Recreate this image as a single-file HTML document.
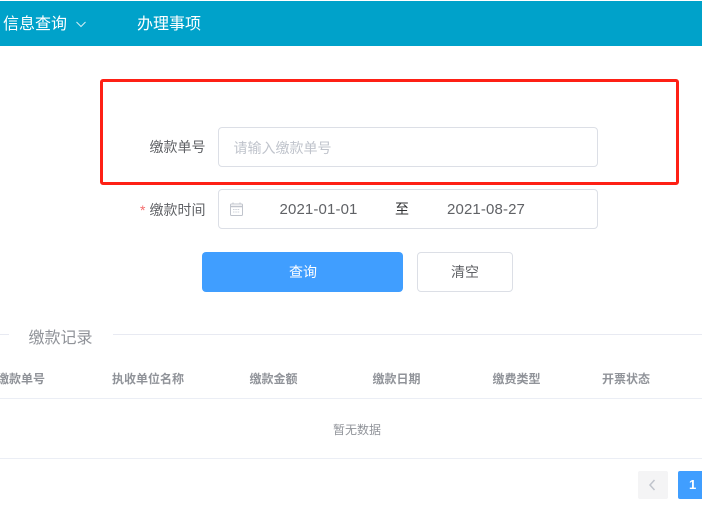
<!DOCTYPE html>
<html><head><meta charset="utf-8">
<style>
html,body{margin:0;padding:0;background:#fff}
body{width:702px;height:508px;position:relative;overflow:hidden;font-family:"Liberation Sans","Noto Sans CJK SC",sans-serif;}
.a{position:absolute;white-space:nowrap}
.th{top:371px;font-size:12px;line-height:16px;font-weight:700;color:#909399}
.lab{font-size:14px;line-height:20px;color:#606266}
</style></head><body>
<div class="a" style="left:0;top:1px;width:702px;height:45px;background:#00a2ca"></div>
<div class="a" style="left:3px;top:14px;font-size:16px;line-height:22px;color:#fff">信息查询</div>
<svg class="a" style="left:75px;top:20px" width="12" height="10" viewBox="0 0 12 10"><path d="M1.5 2L6 6.5L10.5 2" fill="none" stroke="#d5eef5" stroke-width="1"/></svg>
<div class="a" style="left:137px;top:14px;font-size:16px;line-height:22px;color:#fff">办理事项</div>

<div class="a" style="left:100px;top:79px;width:579px;height:106px;box-sizing:border-box;border:3px solid #fe2015;border-radius:3px"></div>

<div class="a lab" style="left:149.5px;top:136.5px">缴款单号</div>
<div class="a" style="left:218px;top:127px;width:380px;height:40px;box-sizing:border-box;border:1px solid #dcdfe6;border-radius:4px"></div>
<div class="a" style="left:233.5px;top:137.5px;font-size:14px;line-height:20px;color:#c0c4cc">请输入缴款单号</div>

<div class="a" style="left:140px;top:200px;font-size:14px;line-height:20px;color:#f56c6c">*</div>
<div class="a lab" style="left:149.5px;top:199.5px">缴款时间</div>
<div class="a" style="left:218px;top:189px;width:380px;height:40px;box-sizing:border-box;border:1px solid #dcdfe6;border-radius:4px"></div>
<svg class="a" style="left:229px;top:202px" width="15" height="15" viewBox="0 0 15 15"><path d="M4 .5V2.5M11 .5V2.5" stroke="#c0c4cc" stroke-width="1"/><rect x="1.5" y="2" width="12" height="11.5" rx="1" fill="none" stroke="#c0c4cc"/><path d="M1.5 4.5H13.5" stroke="#c0c4cc" stroke-width="1.5"/><path d="M4 7.5H11M4 10H11" stroke="#cfd3da" stroke-width="1" stroke-dasharray="1.5 .8"/></svg>
<div class="a" style="left:279.5px;top:199.5px;font-size:15px;line-height:20px;letter-spacing:.13px;color:#606266">2021-01-01</div>
<div class="a" style="left:395px;top:199px;font-size:14px;line-height:20px;color:#303133">至</div>
<div class="a" style="left:447px;top:199.5px;font-size:15px;line-height:20px;letter-spacing:.13px;color:#606266">2021-08-27</div>

<div class="a" style="left:202px;top:252px;width:201px;height:40px;background:#409eff;border-radius:4px"></div>
<div class="a" style="left:289px;top:262px;font-size:14px;line-height:20px;color:#fff">查询</div>
<div class="a" style="left:417px;top:252px;width:96px;height:40px;box-sizing:border-box;border:1px solid #dcdfe6;border-radius:4px"></div>
<div class="a" style="left:451px;top:262px;font-size:14px;line-height:20px;color:#606266">清空</div>

<div class="a" style="left:0;top:334px;width:9px;height:1px;background:#e8eaf2"></div>
<div class="a" style="left:113px;top:334px;width:589px;height:1px;background:#e8eaf2"></div>
<div class="a" style="left:28.5px;top:326.5px;font-size:16px;line-height:23px;color:#909399">缴款记录</div>

<div class="a th" style="left:-3px">缴款单号</div>
<div class="a th" style="left:112px">执收单位名称</div>
<div class="a th" style="left:249.5px">缴款金额</div>
<div class="a th" style="left:372.5px">缴款日期</div>
<div class="a th" style="left:492.5px">缴费类型</div>
<div class="a th" style="left:602px">开票状态</div>
<div class="a" style="left:0;top:398px;width:702px;height:1px;background:#ebeef5"></div>
<div class="a" style="left:333px;top:421.5px;font-size:12px;line-height:17px;color:#909399">暂无数据</div>
<div class="a" style="left:0;top:458px;width:702px;height:1px;background:#ebeef5"></div>

<div class="a" style="left:638px;top:471px;width:30px;height:28px;background:#f4f4f5;border-radius:2px"></div>
<svg class="a" style="left:647px;top:479px" width="10" height="12" viewBox="0 0 10 12"><path d="M7.5 1L3 6L7.5 11" fill="none" stroke="#c0c4cc" stroke-width="1.5"/></svg>
<div class="a" style="left:678px;top:471px;width:30px;height:28px;background:#409eff;border-radius:2px"></div>
<div class="a" style="left:689px;top:477px;font-size:13px;line-height:16px;font-weight:700;color:#fff">1</div>
</body></html>
